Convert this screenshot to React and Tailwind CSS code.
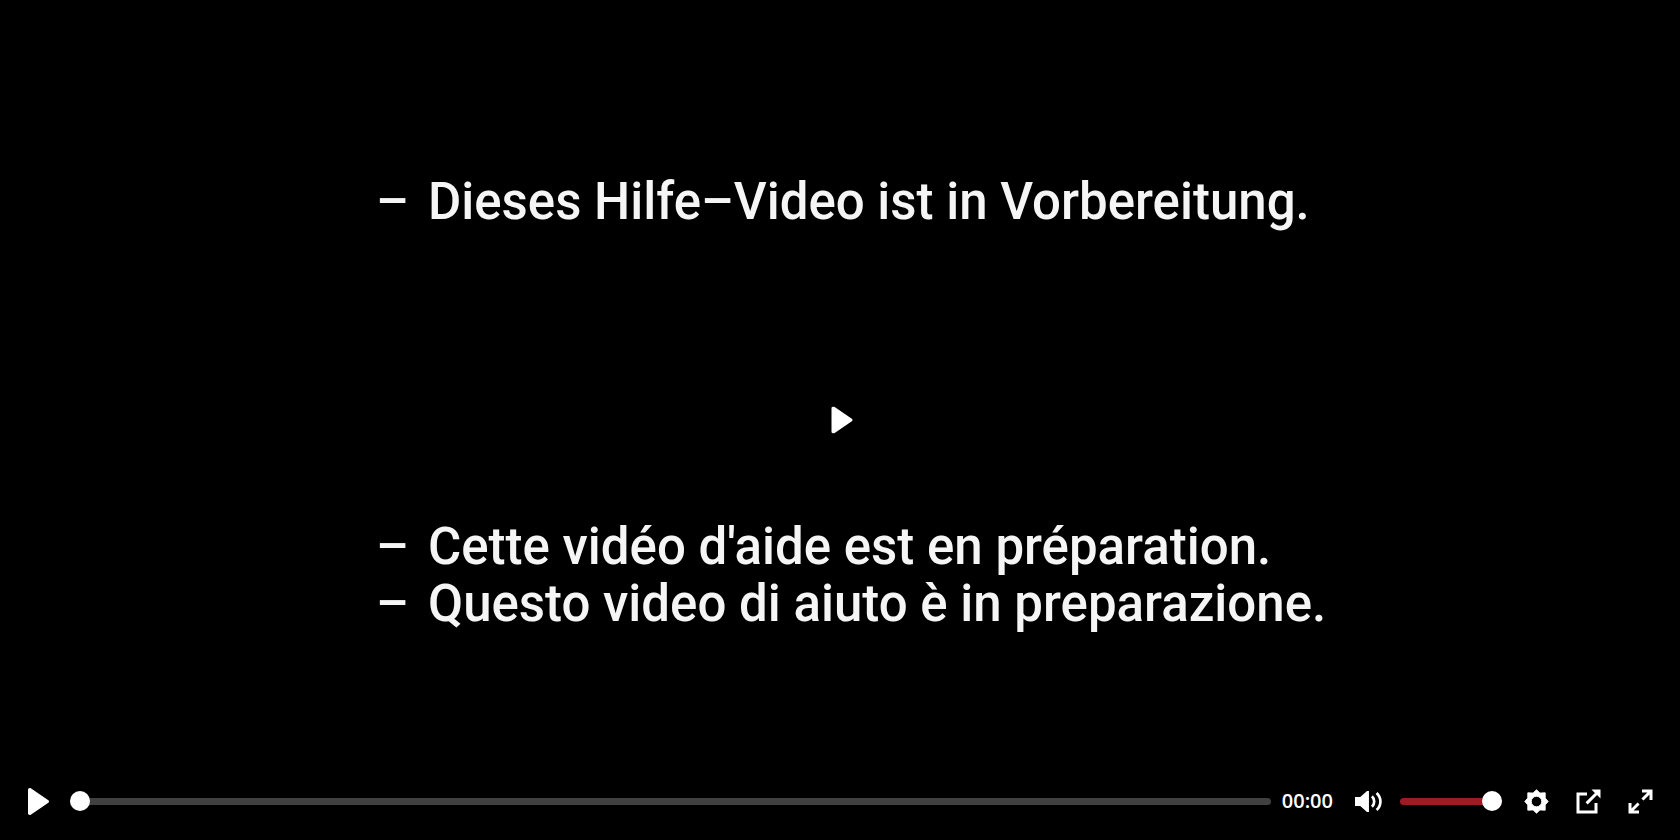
import { useState } from 'react';

const captionsTop = ['Dieses Hilfe–Video ist in Vorbereitung.'];
const captionsBottom = [
  "Cette vidéo d'aide est en préparation.",
  'Questo video di aiuto è in preparazione.',
];

const rangeClass =
  'appearance-none bg-transparent h-5 min-w-0 cursor-pointer [&::-webkit-slider-runnable-track]:h-[7px] [&::-webkit-slider-runnable-track]:rounded-full [&::-webkit-slider-thumb]:appearance-none [&::-webkit-slider-thumb]:size-5 [&::-webkit-slider-thumb]:-mt-[7px] [&::-webkit-slider-thumb]:rounded-full [&::-webkit-slider-thumb]:bg-white';

function Icon({ children }) {
  return (
    <svg viewBox="0 0 18 18" className="size-[27px]" fill="currentColor" aria-hidden="true">
      {children}
    </svg>
  );
}

function PlayIcon() {
  return (
    <Icon>
      <path d="M15.562 8.1L3.87.225c-.818-.562-1.87 0-1.87.9v15.75c0 .9 1.052 1.462 1.87.9L15.563 9.9c.584-.45.584-1.35 0-1.8z" />
    </Icon>
  );
}

function ControlButton({ label, onClick, children }) {
  return (
    <button type="button" aria-label={label} onClick={onClick} className="flex size-12 shrink-0 items-center justify-center">
      {children}
    </button>
  );
}

function Captions({ lines }) {
  return (
    <ul className="font-['Roboto',sans-serif] text-[51px] leading-[57px] font-medium text-[#f5f5f5]">
      {lines.map(line => (
        <li key={line} className="flex whitespace-nowrap">
          <span className="w-[52px] shrink-0">–</span>
          <span>{line}</span>
        </li>
      ))}
    </ul>
  );
}

export default function App() {
  const [playing, setPlaying] = useState(false);
  const [position, setPosition] = useState(0);
  const [volume, setVolume] = useState(100);

  const toggle = () => setPlaying(!playing);

  return (
    <main className="relative flex min-h-screen flex-col bg-black text-white">
      <div className="mx-auto flex w-full max-w-[928px] flex-1 flex-col gap-72 pt-[173px]">
        <Captions lines={captionsTop} />
        <Captions lines={captionsBottom} />
      </div>

      {/* large play button over the video */}
      <button
        type="button"
        aria-label="Play video"
        onClick={toggle}
        className="absolute top-1/2 left-1/2 -translate-x-1/2 -translate-y-1/2 py-3 pr-3 pl-4"
      >
        <PlayIcon />
      </button>

      <div className="flex items-center gap-1 pr-4 pb-[15px] pl-[14px]">
        <ControlButton label="Play" onClick={toggle}>
          <PlayIcon />
        </ControlButton>
        <input
          type="range"
          aria-label="Seek"
          min="0"
          max="100"
          value={position}
          onChange={e => setPosition(Number(e.target.value))}
          className={`${rangeClass} ml-1 flex-1 [&::-webkit-slider-runnable-track]:bg-[#404040]`}
        />
        <time className="mx-[7px] font-['Open_Sans',sans-serif] text-xl font-semibold">00:00</time>
        <ControlButton label="Mute">
          <Icon>
            <path d="M0 6h3.5L8 2h1.3v14H8l-4.5-4H0z" />
            <path d="M11.3 5.5c2 2 2 5 0 7M14.4 3.3c3.4 3.2 3.4 8.2 0 11.4" fill="none" stroke="currentColor" strokeWidth="1.8" />
          </Icon>
        </ControlButton>
        <input
          type="range"
          aria-label="Volume"
          min="0"
          max="100"
          value={volume}
          onChange={e => setVolume(Number(e.target.value))}
          className={`${rangeClass} mr-1.5 ml-1 w-[102px] [&::-webkit-slider-runnable-track]:bg-[#9e1b24]`}
        />
        <ControlButton label="Settings">
          <Icon>
            <path
              d="M9 1.2l2.3 2.2 3.5-.2v3.5L16.8 9l-2 2.3v3.5l-3.5-.2L9 16.8l-2.3-2.2-3.5.2v-3.5L1.2 9l2-2.3V3.2l3.5.2zM9 5.5a3.5 3.5 0 100 7 3.5 3.5 0 000-7z"
              fillRule="evenodd"
              stroke="currentColor"
              strokeWidth=".6"
              strokeLinejoin="round"
            />
          </Icon>
        </ControlButton>
        <ControlButton label="Picture in picture">
          <Icon>
            <path d="M13.293 3.293L7.022 9.564l1.414 1.414 6.271-6.271L17 7V1h-6z" />
            <path d="M13 15H3V5h5V3H1v14h14v-7h-2z" />
          </Icon>
        </ControlButton>
        <ControlButton label="Fullscreen">
          <Icon>
            <path d="M10 3h3.6l-4 4L11 8.4l4-4V8h2V1h-7zM7 9.6l-4 4V10H1v7h7v-2H4.4l4-4z" />
          </Icon>
        </ControlButton>
      </div>
    </main>
  );
}
